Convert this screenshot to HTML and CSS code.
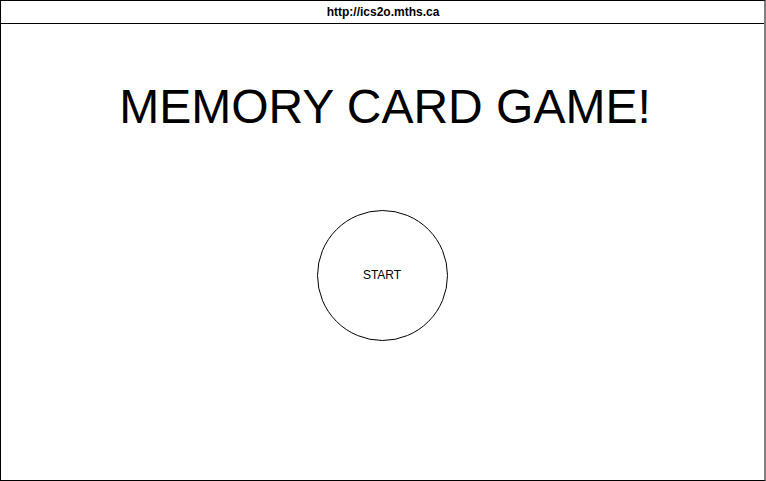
FILE: index.html
```html
<!DOCTYPE html>
<html lang="en">
<head>
<meta charset="utf-8">
<title>Memory Card Game</title>
<link rel="stylesheet" href="styles.css">
</head>
<body>
<div class="frame">
  <div class="urlbar">http://ics2o.mths.ca</div>
  <main class="content">
    <h1 class="title">MEMORY CARD GAME!</h1>
    <button class="start" type="button">START</button>
  </main>
</div>
</body>
</html>
```

FILE: styles.css
```css
html, body {
  margin: 0;
  padding: 0;
  background: #fff;
}
body {
  font-family: "Liberation Sans", Arial, sans-serif;
  color: #000;
}
.frame {
  box-sizing: border-box;
  width: 766px;
  height: 481px;
  border: 1px solid #000;
  border-right: 2px solid #808080;
  display: flex;
  flex-direction: column;
}
.urlbar {
  height: 22px;
  border-bottom: 1px solid #000;
  display: flex;
  align-items: center;
  justify-content: center;
  font-size: 12px;
  font-weight: bold;
  padding-left: 1px;
}
.content {
  display: flex;
  flex-direction: column;
  align-items: center;
  padding-left: 1px;
}
.title {
  margin: 55px 0 0 0;
  font-size: 48px;
  font-weight: normal;
  line-height: 56px;
  padding-left: 4px;
}
.start {
  margin-top: 75px;
  margin-right: 2px;
  box-sizing: border-box;
  width: 131px;
  height: 131px;
  border: 1px solid #000;
  border-radius: 50%;
  background: #fff;
  font-family: "Liberation Sans", Arial, sans-serif;
  font-size: 12px;
  color: #000;
  padding: 0 0 2px 0;
  cursor: pointer;
}
```
